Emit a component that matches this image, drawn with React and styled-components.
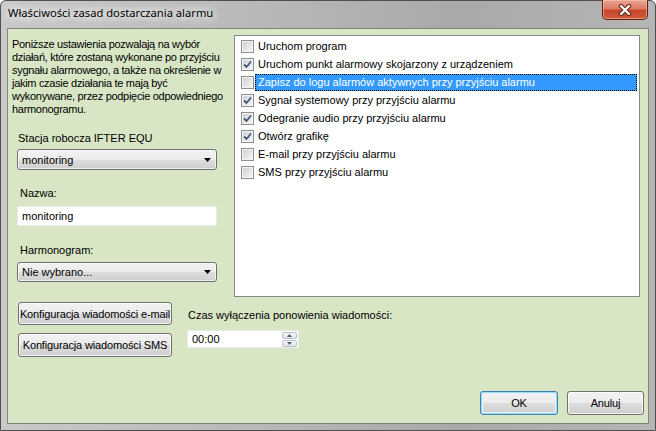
import React from "react";
import styled, { createGlobalStyle, css } from "styled-components";

const GlobalStyle = createGlobalStyle`
  html, body {
    margin: 0;
    padding: 0;
    width: 656px;
    height: 431px;
    overflow: hidden;
    background: #ffffff;
  }
  * {
    box-sizing: border-box;
  }
`;

const Window = styled.div`
  width: 656px;
  height: 431px;
  display: flex;
  flex-direction: column;
  padding: 0 6px 6px 6px;
  border: 1px solid #4e4e4e;
  border-radius: 6px 6px 0 0;
  background: linear-gradient(to right, #c9c9c9 0%, #bababa 35%, #a9a9a9 70%, #b5b5b5 100%);
  font-family: "Liberation Sans", Arial, sans-serif;
  font-size: 11px;
  color: #000;
`;

const TitleBar = styled.div`
  height: 27px;
  display: flex;
  align-items: flex-start;
  justify-content: space-between;
  padding-left: 1px;
`;

const Title = styled.span`
  margin-top: 4px;
  font-family: "Noto Sans", "Liberation Sans", sans-serif;
  font-size: 11.2px;
  line-height: 16px;
  color: #000;
  text-shadow: 0 0 6px #f4f4f4, 0 0 10px #eeeeee, 0 0 14px #e8e8e8;
`;

const CloseButton = styled.div`
  width: 46px;
  height: 20px;
  margin-top: -1px;
  margin-right: 1px;
  display: flex;
  align-items: center;
  justify-content: center;
  border: 1px solid #5c2219;
  border-top: none;
  border-radius: 0 0 5px 5px;
  background: linear-gradient(to bottom, #e9a493 0%, #dc7c62 45%, #c9452a 55%, #cf5a3c 100%);
  box-shadow: inset 0 0 0 1px rgba(255, 200, 180, 0.55);
`;

const Client = styled.div`
  flex: 1;
  display: flex;
  flex-direction: column;
  border: 1px solid #7f867b;
  background: #d8e6c5;
`;

const Top = styled.div`
  display: flex;
  align-items: flex-start;
  padding: 6px 8px 0 4px;
`;

const LeftPane = styled.div`
  width: 222px;
  display: flex;
  flex-direction: column;
`;

const Description = styled.div`
  margin-top: 3px;
  line-height: 13px;
  letter-spacing: -0.3px;
  white-space: nowrap;
`;

const FieldLabel = styled.div`
  margin-top: ${({ $gap }) => $gap}px;
  margin-left: ${({ $indent }) => $indent}px;
  line-height: 13px;
`;

const fieldBox = css`
  width: 200px;
  margin-left: 5px;
  display: flex;
  align-items: center;
  padding-left: 4px;
`;

const Combo = styled.div`
  ${fieldBox};
  margin-top: ${({ $gap }) => $gap}px;
  height: ${({ $height }) => $height}px;
  justify-content: space-between;
  padding-right: 5px;
  border: 1px solid #707070;
  border-radius: 3px;
  background: linear-gradient(to bottom, #f2f2f2 0%, #ebebeb 50%, #dddddd 51%, #cfcfcf 100%);
  box-shadow: inset 0 0 0 1px rgba(255, 255, 255, 0.7);
`;

const TextBox = styled.div`
  ${fieldBox};
  margin-top: ${({ $gap }) => $gap}px;
  height: 20px;
  border: 1px solid #e6ebe3;
  background: #ffffff;
`;

const CheckList = styled.div`
  width: 406px;
  height: 262px;
  padding-top: 1px;
  border: 1px solid #828790;
  background: #ffffff;
`;

const Row = styled.div`
  height: 18px;
  display: flex;
  align-items: center;
  padding-left: 6px;
  padding-right: 2px;
`;

const Box = styled.span`
  width: 13px;
  height: 13px;
  flex: none;
  display: flex;
  align-items: center;
  justify-content: center;
  border: 1px solid #8e8f8f;
  background: linear-gradient(135deg, #c9ccd1 0%, #e4e5e7 55%, #f7f7f7 100%);
  box-shadow: inset 0 0 0 1px #f4f4f4;
`;

const ItemText = styled.span`
  flex: 1;
  height: 17px;
  margin-left: 1px;
  padding-left: 2px;
  display: flex;
  align-items: center;
  border: 1px dotted ${({ $selected }) => ($selected ? "#000" : "transparent")};
  background: ${({ $selected }) => ($selected ? "#3399ff" : "transparent")};
  color: ${({ $selected }) => ($selected ? "#ffffff" : "#000")};
  white-space: nowrap;
`;

const Middle = styled.div`
  display: flex;
  align-items: flex-start;
  gap: 16px;
  margin-top: 5px;
  padding-left: 10px;
`;

const ButtonColumn = styled.div`
  display: flex;
  flex-direction: column;
  gap: 8px;
`;

const Button = styled.div`
  width: ${({ $width }) => $width}px;
  height: ${({ $height }) => $height || 23}px;
  display: flex;
  align-items: center;
  justify-content: center;
  border: 1px solid ${({ $focused }) => ($focused ? "#3c7fb1" : "#707070")};
  border-radius: 3px;
  background: linear-gradient(to bottom, #f2f2f2 0%, #ebebeb 50%, #dddddd 51%, #cfcfcf 100%);
  box-shadow: ${({ $focused }) =>
    $focused ? "inset 0 0 0 1px #9fdcf6, inset 0 0 0 2px #dff2fb" : "inset 0 0 0 1px rgba(255,255,255,0.75)"};
  letter-spacing: -0.15px;
  white-space: nowrap;
`;

const TimeColumn = styled.div`
  display: flex;
  flex-direction: column;
`;

const TimeLabel = styled.div`
  margin-top: 7px;
  line-height: 13px;
`;

const TimeBox = styled.div`
  width: 112px;
  height: 18px;
  margin-top: 8px;
  margin-left: -1px;
  display: flex;
  align-items: center;
  justify-content: space-between;
  padding: 0 1px 0 4px;
  border: 1px solid #e6ebe3;
  background: #ffffff;
`;

const Spinner = styled.div`
  width: 15px;
  height: 15px;
  display: flex;
  flex-direction: column;
  gap: 1px;
`;

const SpinHalf = styled.div`
  flex: 1;
  display: flex;
  align-items: center;
  justify-content: center;
  border: 1px solid #b8c3cf;
  border-radius: 2px;
  background: linear-gradient(to bottom, #f4f6f8, #dde3ea);
`;

const Footer = styled.div`
  margin-top: auto;
  display: flex;
  justify-content: flex-end;
  gap: 9px;
  padding: 0 4px 8px 0;
`;

const DownArrow = () => (
  <svg width="7" height="4" viewBox="0 0 7 4">
    <path d="M0 0 H7 L3.5 4 Z" fill="#000" />
  </svg>
);

const SpinArrow = ({ up }) => (
  <svg width="5" height="3" viewBox="0 0 5 3">
    <path d={up ? "M0 3 H5 L2.5 0 Z" : "M0 0 H5 L2.5 3 Z"} fill="#4f5d70" />
  </svg>
);

const CheckMark = () => (
  <svg width="9" height="9" viewBox="0 0 9 9">
    <path d="M1 4.5 L3.5 7 L8 1.5" fill="none" stroke="#42577d" strokeWidth="1.8" />
  </svg>
);

const CloseGlyph = () => (
  <svg width="14" height="12" viewBox="0 0 14 12">
    <path d="M3 2 L11 10 M11 2 L3 10" stroke="#5a2016" strokeWidth="4.2" strokeLinecap="round" />
    <path d="M3 2 L11 10 M11 2 L3 10" stroke="#ffffff" strokeWidth="2.4" strokeLinecap="round" />
  </svg>
);

const description = [
  "Poniższe ustawienia pozwalają na wybór",
  "działań, które zostaną wykonane po przyjściu",
  "sygnału alarmowego, a także na określenie w",
  "jakim czasie działania te mają być",
  "wykonywane, przez podpięcie odpowiedniego",
  "harmonogramu.",
];

const actions = [
  { label: "Uruchom program", checked: false },
  { label: "Uruchom punkt alarmowy skojarzony z urządzeniem", checked: true },
  { label: "Zapisz do logu alarmów aktywnych przy przyjściu alarmu", checked: false, selected: true },
  { label: "Sygnał systemowy przy przyjściu alarmu", checked: true },
  { label: "Odegranie audio przy przyjściu alarmu", checked: true },
  { label: "Otwórz grafikę", checked: true },
  { label: "E-mail przy przyjściu alarmu", checked: false },
  { label: "SMS przy przyjściu alarmu", checked: false },
];

export default function App() {
  return (
    <>
      <GlobalStyle />
      <Window>
        <TitleBar>
          <Title>Właściwości zasad dostarczania alarmu</Title>
          <CloseButton>
            <CloseGlyph />
          </CloseButton>
        </TitleBar>
        <Client>
          <Top>
            <LeftPane>
              <Description>
                {description.map((line) => (
                  <div key={line}>{line}</div>
                ))}
              </Description>
              <FieldLabel $gap={16} $indent={6}>Stacja robocza IFTER EQU</FieldLabel>
              <Combo $gap={4} $height={21}>
                <span>monitoring</span>
                <DownArrow />
              </Combo>
              <FieldLabel $gap={17} $indent={8}>Nazwa:</FieldLabel>
              <TextBox $gap={6}>monitoring</TextBox>
              <FieldLabel $gap={18} $indent={8}>Harmonogram:</FieldLabel>
              <Combo $gap={5} $height={20}>
                <span>Nie wybrano...</span>
                <DownArrow />
              </Combo>
            </LeftPane>
            <CheckList>
              {actions.map((item) => (
                <Row key={item.label}>
                  <Box>{item.checked && <CheckMark />}</Box>
                  <ItemText $selected={item.selected}>{item.label}</ItemText>
                </Row>
              ))}
            </CheckList>
          </Top>
          <Middle>
            <ButtonColumn>
              <Button $width={154}>Konfiguracja wiadomości e-mail</Button>
              <Button $width={154} $height={24}>Konfiguracja wiadomości SMS</Button>
            </ButtonColumn>
            <TimeColumn>
              <TimeLabel>Czas wyłączenia ponowienia wiadomości:</TimeLabel>
              <TimeBox>
                <span>00:00</span>
                <Spinner>
                  <SpinHalf><SpinArrow up /></SpinHalf>
                  <SpinHalf><SpinArrow /></SpinHalf>
                </Spinner>
              </TimeBox>
            </TimeColumn>
          </Middle>
          <Footer>
            <Button $width={78} $height={24} $focused>OK</Button>
            <Button $width={77} $height={24}>Anuluj</Button>
          </Footer>
        </Client>
      </Window>
    </>
  );
}
